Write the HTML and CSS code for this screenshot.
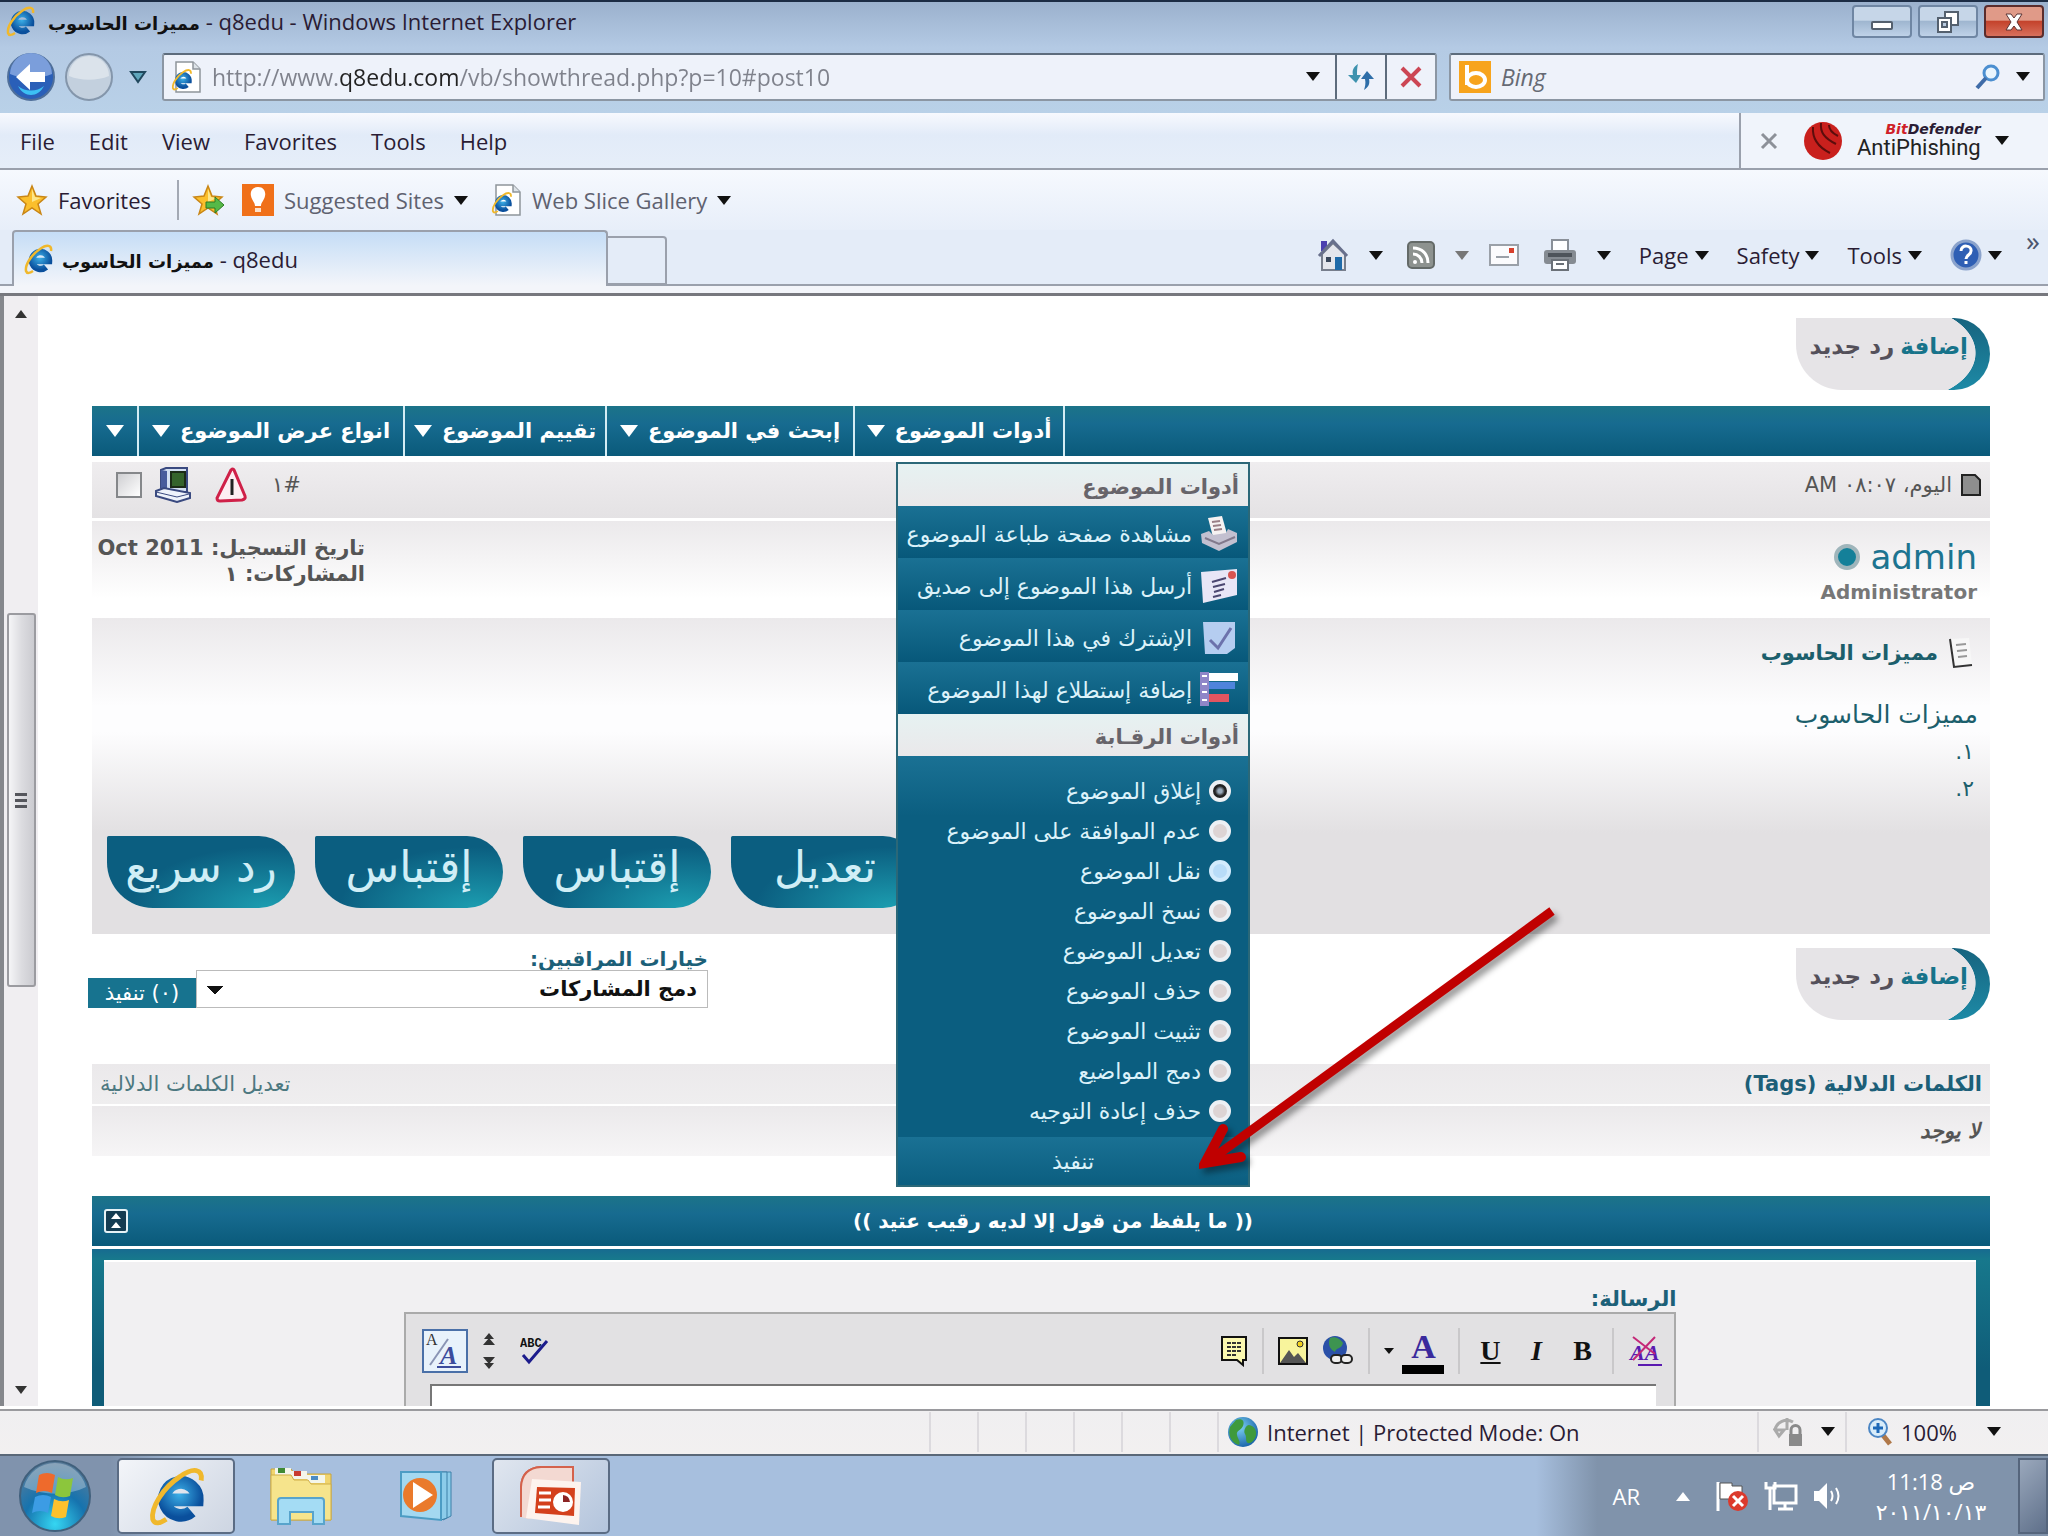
FILE: index.html
```html
<!DOCTYPE html>
<html lang="en">
<head>
    <meta charset="UTF-8">
    <meta name="viewport" content="width=device-width, initial-scale=1.0">
    <title>مميزات الحاسوب - q8edu</title>
    <link rel="stylesheet" href="styles.css">
</head>
<body>
    <!-- shared icons -->
    <svg class="defs" width="0" height="0">
        <defs>
            <radialGradient id="ieBlue" cx="45%" cy="35%" r="70%">
                <stop offset="0" stop-color="#3cb0e8"/>
                <stop offset="1" stop-color="#0a4f9c"/>
            </radialGradient>
            <radialGradient id="orb" cx="50%" cy="90%" r="90%">
                <stop offset="0" stop-color="#35d6f2"/>
                <stop offset="0.5" stop-color="#1673ae"/>
                <stop offset="1" stop-color="#5c7d9a"/>
            </radialGradient>
            <radialGradient id="globe" cx="40%" cy="35%" r="70%">
                <stop offset="0" stop-color="#7cd0f0"/>
                <stop offset="1" stop-color="#1660a8"/>
            </radialGradient>
            <symbol id="ie" viewBox="0 0 32 32">
                <path d="M10 18h17a8.500 8.500 0 1 0-3 6" fill="none" stroke="url(#ieBlue)" stroke-width="6.500"/>
                <path d="M29 8C30 2 25 1 18 6 9 12 3 22 4 28c1 3 4 2 7 0" fill="none" stroke="#f0b82c" stroke-width="2.500"/>
            </symbol>
            <symbol id="iepage" viewBox="0 0 32 32">
                <path d="M6 1h17l7 7v23H6z" fill="#fff" stroke="#8f959b" stroke-width="1.500"/>
                <path d="M23 1v7h7" fill="#dde3e8" stroke="#8f959b" stroke-width="1.500"/>
                <use href="#ie" x="0" y="7" width="23" height="23"/>
            </symbol>
            <symbol id="star" viewBox="0 0 32 32">
                <path d="M16 2l4 10 10 1-8 7 3 10-9-6-9 6 3-10-8-7 10-1z" fill="#fbbf2c" stroke="#c98616" stroke-width="1.500"/>
                <path d="M16 5l3 8 6 1-9 4z" fill="#fde68a"/>
            </symbol>
        </defs>
    </svg>

    <div class="window">
        <header class="titlebar">
            <svg class="icon"><use href="#ie"/></svg>
            <span class="title"><bdi class="ar">مميزات الحاسوب</bdi> - q8edu - Windows Internet Explorer</span>
            <div class="winbuttons">
                <button class="winbtn" aria-label="Minimize"><svg width="24" height="20" viewBox="0 0 24 20"><rect x="2" y="10" width="20" height="7" rx="1" fill="#fff" stroke="#54606e" stroke-width="2"/></svg></button>
                <button class="winbtn" aria-label="Restore"><svg width="24" height="24" viewBox="0 0 24 24"><path d="M9 2h13v13H9z" fill="#fff" stroke="#54606e" stroke-width="2"/><path d="M2 8h13v14H2z" fill="#fff" stroke="#54606e" stroke-width="2"/><path d="M6 12h5v5H6z" fill="#b9cbe0" stroke="#54606e" stroke-width="2"/></svg></button>
                <button class="winbtn close" aria-label="Close"><svg width="24" height="20" viewBox="0 0 24 20"><path d="M4 2h5l3 4 3-4h5l-5 8 5 8h-5l-3-4-3 4H4l5-8z" fill="#fff" stroke="#5c3434" stroke-width="1"/></svg></button>
            </div>
        </header>

        <div class="navbar">
            <button class="navbtn" aria-label="Back">
                <svg width="50" height="50" viewBox="0 0 50 50"><circle cx="25" cy="25" r="23" fill="#2a5fb8" stroke="#4f6f9a" stroke-width="2"/><path d="M4 22a21 21 0 0 1 42 0c-12 5-30 5-42 0z" fill="#7b9edb"/><path d="M12 34a21 21 0 0 0 26 0c-6 12-20 12-26 0z" fill="#3cc0f4"/><path d="M10 25l14-13v8h15v10H24v8z" fill="#fff"/></svg>
            </button>
            <button class="navbtn" aria-label="Forward">
                <svg width="50" height="50" viewBox="0 0 50 50"><circle cx="25" cy="25" r="23" fill="#c3d0de" stroke="#8496ab" stroke-width="2"/><path d="M5 24a20 20 0 0 1 40 0c-12 5-28 5-40 0z" fill="#dbe3eb"/></svg>
            </button>
            <button class="recent" aria-label="Recent pages"><svg width="18" height="14" viewBox="0 0 18 14"><path d="M2 2h14l-7 10z" fill="#5fa6bc" stroke="#20485e" stroke-width="2"/></svg></button>
            <div class="addressbox">
                <svg class="icon"><use href="#iepage"/></svg>
                <input class="address" type="text" aria-label="Address" value="http://www.q8edu.com/vb/showthread.php?p=10#post10">
                <button class="plain" aria-label="Show addresses"><i class="caret"></i></button>
                <button class="boxbtn" aria-label="Refresh"><svg width="30" height="30" viewBox="0 0 30 30"><path d="M12 2C7 5 6 9 7 13H2l8 8 5-8h-4c0-4 0-7 1-11z" fill="#3d92ae"/><path d="M18 28c5-3 6-7 5-11h5l-7-8-6 8h4c1 4 0 8-1 11z" fill="#2e6ea8"/></svg></button>
                <button class="boxbtn" aria-label="Stop"><svg width="24" height="24" viewBox="0 0 24 24"><path d="M3 3l18 18M21 3L3 21" stroke="#cc4654" stroke-width="4"/></svg></button>
            </div>
            <div class="searchbox">
                <svg width="32" height="32" viewBox="0 0 32 32"><rect width="32" height="32" fill="#f7a41d"/><path d="M8 4v20" stroke="#fff" stroke-width="4"/><ellipse cx="17" cy="19" rx="9" ry="7" fill="none" stroke="#fff" stroke-width="4"/></svg>
                <input class="search" type="text" aria-label="Search" placeholder="Bing">
                <button class="plain" aria-label="Search"><svg width="26" height="26" viewBox="0 0 26 26"><circle cx="16" cy="9" r="7" fill="#eaf5fd" stroke="#4c8fd0" stroke-width="3"/><path d="M11 14l-9 10" stroke="#3f6ca8" stroke-width="4"/></svg></button>
                <button class="plain" aria-label="Search options"><i class="caret"></i></button>
            </div>
        </div>

        <div class="menubar">
            <nav class="menus">
                <a href="#">File</a><a href="#">Edit</a><a href="#">View</a><a href="#">Favorites</a><a href="#">Tools</a><a href="#">Help</a>
            </nav>
            <div class="antiphishing">
                <button class="plain" aria-label="Close toolbar"><svg width="18" height="18" viewBox="0 0 18 18"><path d="M2 2l14 14M16 2L2 16" stroke="#8d9199" stroke-width="3"/></svg></button>
                <svg width="40" height="40" viewBox="0 0 40 40"><circle cx="20" cy="20" r="19" fill="#c9201d"/><path d="M10 6c-1 12 5 20 17 26M18 2c-1 9 3 15 15 21M26 4c0 4 3 8 9 11" fill="none" stroke="#5c0d0c" stroke-width="2"/></svg>
                <div class="bitdefender"><span class="brand"><b>Bit</b>Defender</span><span class="product">AntiPhishing</span></div>
                <i class="caret"></i>
            </div>
        </div>

        <div class="favbar">
            <svg class="icon"><use href="#star"/></svg>
            <a href="#" class="dark">Favorites</a>
            <span class="sep"></span>
            <svg class="icon" viewBox="0 0 32 32"><use href="#star"/><path d="M14 18h9v-5l9 8-9 8v-5h-9z" fill="#56b947" stroke="#2d7a24"/></svg>
            <svg class="icon suggested" viewBox="0 0 32 32"><rect width="32" height="32" fill="#f07019"/><path d="M16 3c-6 0-8 5-7 9 1 5 4 6 4 10h6c0-4 3-5 4-10 1-4-1-9-7-9z" fill="#fff"/><path d="M13 24h6v4h-6z" fill="#fde0c8"/></svg>
            <a href="#">Suggested Sites</a>
            <i class="caret"></i>
            <svg class="icon slice"><use href="#iepage"/></svg>
            <a href="#">Web Slice Gallery</a>
            <i class="caret"></i>
        </div>

        <div class="tabrow">
            <div class="tab">
                <svg class="icon"><use href="#ie"/></svg>
                <span><bdi class="ar">مميزات الحاسوب</bdi> - q8edu</span>
            </div>
            <button class="newtab" aria-label="New tab"></button>
            <div class="commands">
                <button class="cmd" aria-label="Home"><svg width="32" height="34" viewBox="0 0 32 34"><path d="M4 3h6v10H4z" fill="#4a3fb0"/><path d="M5 16v16h23V16L16 5z" fill="#e4e6ec" stroke="#777e8c" stroke-width="2"/><path d="M2 18L16 3l14 15" fill="none" stroke="#68708c" stroke-width="3"/><path d="M18 19h7v13h-7z" fill="#1f6aa8"/><path d="M9 19h5v5H9z" fill="#394659"/></svg><i class="caret"></i></button>
                <button class="cmd" aria-label="Feeds"><svg width="28" height="28" viewBox="0 0 28 28"><rect x="1" y="1" width="26" height="26" rx="4" fill="#8d928f" stroke="#646a68" stroke-width="2"/><circle cx="8" cy="21" r="2" fill="#fff"/><path d="M6 13c5 0 9 4 9 9M6 7c9 0 15 6 15 15" fill="none" stroke="#fff" stroke-width="3"/></svg><i class="caret dim"></i></button>
                <button class="cmd mail" aria-label="Read mail"><svg width="30" height="22" viewBox="0 0 30 22"><rect x="1" y="1" width="28" height="20" fill="#fbfbfd" stroke="#9aa0a8" stroke-width="2"/><rect x="20" y="4" width="5" height="5" fill="#d8402c"/><path d="M7 13h13" stroke="#9aa0a8" stroke-width="2"/></svg></button>
                <button class="cmd" aria-label="Print"><svg width="34" height="32" viewBox="0 0 34 32"><path d="M9 1h16v12H9z" fill="#fff" stroke="#8a9098" stroke-width="2"/><rect x="1" y="11" width="32" height="14" rx="3" fill="#858b92"/><path d="M5 14h24v4H5z" fill="#4e545b"/><path d="M9 21h16v10H9z" fill="#fff" stroke="#6b7178" stroke-width="2"/><path d="M13 25h8" stroke="#6b7178" stroke-width="2"/></svg><i class="caret"></i></button>
                <button class="cmd text">Page<i class="caret"></i></button>
                <button class="cmd text">Safety<i class="caret"></i></button>
                <button class="cmd text">Tools<i class="caret"></i></button>
                <button class="cmd text" aria-label="Help"><svg width="32" height="32" viewBox="0 0 32 32"><circle cx="16" cy="16" r="14" fill="#2f5fb4" stroke="#8ba3cc" stroke-width="3"/><path d="M11 12c0-7 11-6 10 0 0 4-5 4-5 8M16 22v3" fill="none" stroke="#fff" stroke-width="3"/></svg><i class="caret"></i></button>
                <span class="more">»</span>
            </div>
        </div>

        <main class="view">
            <div class="scrollbar">
                <i class="up"></i>
                <div class="thumb"><i></i><i></i><i></i></div>
                <i class="down"></i>
            </div>

            <div class="page" dir="rtl" lang="ar">
                <a href="#" class="newreply"><b>إضافة</b> رد جديد</a>

                <div class="toolbar" dir="ltr">
                    <a href="#" aria-label="خيارات"><i class="caret white"></i></a>
                    <a href="#"><i class="caret white"></i><bdi>انواع عرض الموضوع</bdi></a>
                    <a href="#"><i class="caret white"></i><bdi>تقييم الموضوع</bdi></a>
                    <a href="#"><i class="caret white"></i><bdi>إبحث في الموضوع</bdi></a>
                    <div class="opened">
                        <a href="#"><i class="caret white"></i><bdi>أدوات الموضوع</bdi></a>
                        <form class="popup" dir="rtl">
                            <h2>أدوات الموضوع</h2>
                            <a href="#"><svg width="38" height="36" viewBox="0 0 38 36"><path d="M8 2l14-2 5 18-14 3z" fill="#f6f2f2"/><path d="M12 6l8-1M13 10l8-1M14 14l8-1" stroke="#9a7f86" stroke-width="2"/><path d="M1 18l8-3 4 4 13-2 2-4 9 4v9l-18 9-17-8z" fill="#c3c0d0"/><path d="M5 22l14 6 16-7" fill="none" stroke="#82798c" stroke-width="2"/></svg>مشاهدة صفحة طباعة الموضوع</a>
                            <a href="#"><svg width="38" height="36" viewBox="0 0 38 36"><path d="M1 4l36-3v26L3 35z" fill="#e8e6f6"/><path d="M12 14l14-4M13 19l12-3M14 24l10-3M13 29l8-2" stroke="#4b4670" stroke-width="2"/><circle cx="32" cy="7" r="4" fill="#d85450"/></svg>أرسل هذا الموضوع إلى صديق</a>
                            <a href="#"><svg width="38" height="36" viewBox="0 0 38 36"><path d="M3 2h32v26l-8 6H5z" fill="#b5cdf0"/><path d="M10 20l8 8L31 8" fill="none" stroke="#6c72ac" stroke-width="3"/></svg>الإشترك في هذا الموضوع</a>
                            <a href="#"><svg width="38" height="36" viewBox="0 0 38 36"><path d="M0 0h9v34H0z" fill="#8f86c8"/><path d="M9 1h29v8H9z" fill="#fff"/><path d="M9 10h26v7H9z" fill="#4f84dc"/><path d="M9 22h20v8H9z" fill="#e25560"/><path d="M2 4h5M2 12h5M2 20h5M2 28h5" stroke="#fff" stroke-width="2"/></svg>إضافة إستطلاع لهذا الموضوع</a>
                            <h2>أدوات الرقـابة</h2>
                            <div class="choices">
                                <label><input type="radio" name="do" checked>إغلاق الموضوع</label>
                                <label><input type="radio" name="do">عدم الموافقة على الموضوع</label>
                                <label><input type="radio" name="do" class="hot">نقل الموضوع</label>
                                <label><input type="radio" name="do">نسخ الموضوع</label>
                                <label><input type="radio" name="do">تعديل الموضوع</label>
                                <label><input type="radio" name="do">حذف الموضوع</label>
                                <label><input type="radio" name="do">تثبيت الموضوع</label>
                                <label><input type="radio" name="do">دمج المواضيع</label>
                                <label><input type="radio" name="do">حذف إعادة التوجيه</label>
                            </div>
                            <button type="button" class="go">تنفيذ</button>
                        </form>
                    </div>
                    <span></span>
                </div>

                <article class="post">
                    <div class="posthead">
                        <svg width="22" height="24" viewBox="0 0 22 24"><path d="M2 2h13l5 5v15H2z" fill="#8e8e8e" stroke="#222" stroke-width="2"/></svg>
                        <span>اليوم، ٠٨:٠٧ AM</span>
                        <div class="postlinks" dir="ltr">
                            <input type="checkbox" aria-label="تحديد المشاركة">
                            <svg width="38" height="36" viewBox="0 0 38 36"><path d="M7 3l5-2h21v24H12l-5-4z" fill="#d4e0f2" stroke="#3a4a80" stroke-width="2"/><path d="M7 3l6 1v20l-6-3z" fill="#485c9c"/><path d="M17 5h14v15H17z" fill="#35642c" stroke="#1c2c18" stroke-width="2"/><path d="M2 24l8-3 26 5v5l-13 4L2 29z" fill="#eef3fb" stroke="#3a4a80" stroke-width="2"/><path d="M2 25l21 5 12-3" fill="none" stroke="#3a4a80"/></svg>
                            <svg class="warn" width="34" height="36" viewBox="0 0 34 36"><path d="M17 3L3 31q0 3 3 3l22-1q4-1 3-4L20 3q-1-2-3 0z" fill="#fdeef2" stroke="#cf2048" stroke-width="3"/><path d="M18 12v16" stroke="#222" stroke-width="3"/></svg>
                            <a href="#">١#</a>
                        </div>
                    </div>
                    <div class="poster">
                        <div>
                            <div class="user"><a href="#">admin</a><i class="online"></i></div>
                            <div class="rank">Administrator</div>
                        </div>
                        <div class="stats">تاريخ التسجيل: Oct 2011<br>المشاركات: ١</div>
                    </div>
                    <div class="message">
                        <h3><svg width="26" height="32" viewBox="0 0 26 32"><path d="M2 2l19-1 3 27-18 3z" fill="#f7f7f7"/><path d="M2 2l4 28 18-2" fill="none" stroke="#333" stroke-width="2"/><path d="M8 8l10-1M9 14l10-1M10 20l9-1" stroke="#999" stroke-width="2"/></svg>مميزات الحاسوب</h3>
                        <p class="lead">مميزات الحاسوب</p>
                        <p>١.</p>
                        <p>٢.</p>
                        <div class="actions" dir="ltr">
                            <a href="#">رد سريع</a>
                            <a href="#">إقتباس</a>
                            <a href="#">إقتباس</a>
                            <a href="#">تعديل</a>
                        </div>
                    </div>
                </article>

                <div class="afterpost">
                    <a href="#" class="newreply"><b>إضافة</b> رد جديد</a>
                    <div class="moderate">
                        <label for="modopt">خيارات المراقبين:</label>
                        <div class="modrow">
                            <select id="modopt"><option>دمج المشاركات</option></select>
                            <button>(٠) تنفيذ</button>
                        </div>
                    </div>
                </div>

                <section class="tags">
                    <div class="tagshead"><b>الكلمات الدلالية (Tags)</b><a href="#">تعديل الكلمات الدلالية</a></div>
                    <div class="tagsbody">لا يوجد</div>
                </section>

                <div class="quickhead">
                    <span>(( ما يلفظ من قول إلا لديه رقيب عتيد ))</span>
                    <button aria-label="طي"><svg width="24" height="24" viewBox="0 0 24 24"><rect x="1" y="1" width="22" height="22" rx="2" fill="#143c52" stroke="#e6f2f6" stroke-width="2"/><path d="M12 4l5 6H7zM12 13l5 6H7z" fill="#fff"/></svg></button>
                </div>
                <div class="quickbody">
                    <div class="panel">
                        <div class="editor">
                            <label for="msg">الرسالة:</label>
                            <div class="box">
                                <div class="tools" dir="ltr">
                                    <button class="on" aria-label="Switch mode"><svg width="42" height="40" viewBox="0 0 42 40"><text x="2" y="14" class="aa">A</text><path d="M6 34L24 8" stroke="#8a94b4" stroke-width="2"/><text x="16" y="33" class="aa big">A</text><path d="M13 36h24" stroke="#3c4c9c" stroke-width="2"/></svg></button>
                                    <button aria-label="Resize"><svg width="14" height="36" viewBox="0 0 14 36"><path d="M7 0l5 6H2zM7 5l6 7H1zM7 36l5-6H2zM7 31l6-7H1z" fill="#333"/></svg></button>
                                    <button class="spell" aria-label="Spelling"><svg width="32" height="30" viewBox="0 0 32 30"><text x="0" y="11" class="abc">ABC</text><path d="M3 19l6 7L27 5" fill="none" stroke="#1c1c8c" stroke-width="3"/></svg></button>
                                    <span class="fill"></span>
                                    <button aria-label="Quote"><svg width="28" height="32" viewBox="0 0 28 32"><path d="M2 2h24v23h-3v5l-6-5H2z" fill="#fbf8b0" stroke="#111" stroke-width="2"/><path d="M7 8h14M7 12h14M7 16h14M7 20h10" stroke="#333" stroke-width="2" stroke-dasharray="4 1"/></svg></button>
                                    <i class="line"></i>
                                    <button aria-label="Image"><svg width="30" height="28" viewBox="0 0 30 28"><rect x="1" y="1" width="28" height="26" fill="#f8f49c" stroke="#111" stroke-width="2"/><circle cx="22" cy="7" r="3" fill="#f4d21c" stroke="#333"/><path d="M2 26l9-13 5 7 4-4 8 10z" fill="#555"/></svg></button>
                                    <button aria-label="Link"><svg width="32" height="32" viewBox="0 0 32 32"><circle cx="13" cy="13" r="12" fill="#2a50a8"/><path d="M8 3c6-2 10 1 13 5-2 7-7 4-8 9-4-2-8-7-5-14z" fill="#3d9450"/><rect x="9" y="20" width="11" height="8" rx="4" fill="#eee" stroke="#222" stroke-width="2"/><rect x="19" y="20" width="11" height="8" rx="4" fill="#eee" stroke="#222" stroke-width="2"/></svg></button>
                                    <i class="line"></i>
                                    <button class="color" aria-label="Text color"><i class="caret small"></i><b>A</b></button>
                                    <i class="line"></i>
                                    <button class="glyph"><u>U</u></button>
                                    <button class="glyph"><i>I</i></button>
                                    <button class="glyph">B</button>
                                    <i class="line"></i>
                                    <button aria-label="Remove formatting"><svg width="36" height="32" viewBox="0 0 36 32"><text x="2" y="25" class="aa rm">AA</text><path d="M5 2l22 17M27 2L5 25" stroke="#c42878" stroke-width="2"/><path d="M10 30h24" stroke="#5a1ab0" stroke-width="2"/></svg></button>
                                </div>
                                <textarea id="msg"></textarea>
                            </div>
                        </div>
                    </div>
                </div>
            </div>

            <!-- arrow drawn over the page -->
            <svg class="arrow" width="370" height="280" viewBox="0 0 370 280">
                <path d="M353 4L10 254" fill="none" stroke="#c00000" stroke-width="9"/>
                <path d="M24 222L6 256L42 250" fill="none" stroke="#c00000" stroke-width="10" stroke-linecap="round" stroke-linejoin="miter"/>
            </svg>
        </main>

        <footer class="status">
            <span class="cell"></span><span class="cell"></span><span class="cell"></span><span class="cell"></span><span class="cell"></span><span class="cell"></span>
            <div class="zone">
                <svg width="32" height="32" viewBox="0 0 32 32"><circle cx="16" cy="16" r="15" fill="url(#globe)"/><path d="M9 4c6-2 9 1 7 6s-7 4-6 9 4 6 2 10C3 26 1 18 3 11zM22 9c5 1 8 5 7 10s-5 9-8 8-1-6-3-9 1-9 4-9z" fill="#3f9a3c"/></svg>
                Internet | Protected Mode: On
            </div>
            <div class="protect">
                <svg width="32" height="32" viewBox="0 0 32 32"><path d="M2 14a12 12 0 0 1 18-8M2 14l4 6 5-6zM14 2v12" fill="none" stroke="#aaa" stroke-width="3"/><rect x="16" y="18" width="13" height="12" fill="#8a8a8a"/><path d="M18 18v-4a4 4 0 0 1 9 0v4" fill="none" stroke="#8a8a8a" stroke-width="3"/></svg>
                <i class="caret"></i>
            </div>
            <div class="zoomlevel">
                <svg width="26" height="28" viewBox="0 0 26 28"><path d="M15 16l8 10" stroke="#b07848" stroke-width="5"/><circle cx="11" cy="10" r="9" fill="#d8ecfa" stroke="#4c86c4" stroke-width="2"/><path d="M11 5v10M6 10h10" stroke="#1d68b8" stroke-width="3"/></svg>
                100%
                <i class="caret"></i>
            </div>
        </footer>
    </div>

    <div class="taskbar">
        <button class="start" aria-label="Start">
            <svg width="74" height="74" viewBox="0 0 74 74"><circle cx="37" cy="37" r="35" fill="url(#orb)" stroke="#40607c" stroke-width="2"/><path d="M6 28a32 32 0 0 1 62 0c-18 9-42 9-62 0z" fill="#fff" opacity="0.300"/><path d="M21 16q8-4 16 0l-3 18q-8-4-16 0z" fill="#ee6a2c"/><path d="M40 18q7 4 15 1l-3 18q-8 3-15-1z" fill="#8cc63c"/><path d="M17 38q8-4 16 0l-3 16q-8-4-16 0z" fill="#3c9ce4"/><path d="M36 40q8 4 15 1l-3 17q-8 3-15-1z" fill="#fcc12c"/></svg>
        </button>
        <button class="task active" aria-label="Internet Explorer"><svg width="62" height="62"><use href="#ie"/></svg></button>
        <button class="task" aria-label="Windows Explorer">
            <svg width="64" height="60" viewBox="0 0 64 60"><path d="M2 3h20l4 5h36v46H2z" fill="#f1d56e" stroke="#c7a43c"/><path d="M6 2h16v8H6zM22 5h16v8H22zM38 9h18v8H38z" fill="#f4f6ea"/><path d="M9 2h7v5H9z" fill="#3f8a34"/><path d="M25 5h7v5h-7z" fill="#c83c30"/><path d="M42 10h7v4h-7z" fill="#4c8cc4"/><path d="M2 9h20l3 5h14l3 4h20v36H2z" fill="#f6e48c" stroke="#cfae48"/><path d="M9 58V35q0-3 3-3h40q3 0 3 3v23H44V46H21v12z" fill="#a4dcf4" stroke="#58a4cc" stroke-width="2"/></svg>
        </button>
        <button class="task" aria-label="Media Player">
            <svg width="54" height="52" viewBox="0 0 54 52"><path d="M10 2h42v44l-8 4z" fill="#8cccea" stroke="#3c80a8"/><path d="M6 2h42v46l-6 2z" fill="#8cccea" stroke="#3c80a8"/><path d="M2 2h40v48L2 46z" fill="#a4d8f0" stroke="#4c9cc4" stroke-width="2"/><circle cx="21" cy="25" r="17" fill="#ea7a2c"/><path d="M14 12l20 13-20 13z" fill="#fff"/></svg>
        </button>
        <button class="task open" aria-label="PowerPoint">
            <svg width="64" height="62" viewBox="0 0 64 62"><path d="M2 52V22Q3 3 22 2h32v24" fill="#eddcd8" stroke="#d4624c" stroke-width="2"/><path d="M2 52V22Q3 3 22 2h32v30L10 54z" fill="#f3d9d2"/><path d="M2 52V22Q3 3 22 2h32v24" fill="none" stroke="#d4624c" stroke-width="2"/><path d="M13 14l49 3-2 43-53-7z" fill="#fdf3ee"/><path d="M18 22l38 1-1 28-39-3z" fill="#d4401c"/><path d="M20 28h12M20 35h12M19 42h12" stroke="#fff" stroke-width="3"/><circle cx="44" cy="37" r="10" fill="#fff"/><path d="M44 37v-7a8 8 0 0 1 7 7z" fill="#8c2424"/></svg>
        </button>
        <div class="tray">
            <span class="lang">AR</span>
            <i class="caret upward"></i>
            <svg width="36" height="32" viewBox="0 0 36 32"><path d="M4 2v29" stroke="#fff" stroke-width="3"/><path d="M6 3h12v3h10v13H6z" fill="#fff" stroke="#555" stroke-width="1"/><circle cx="24" cy="21" r="10" fill="#dc3a2c"/><path d="M19 16l10 10M29 16L19 26" stroke="#fff" stroke-width="3"/></svg>
            <svg width="34" height="32" viewBox="0 0 34 32"><rect x="10" y="6" width="22" height="17" fill="#7b8ea5" stroke="#fff" stroke-width="3"/><path d="M14 29h15M21 23v6" stroke="#fff" stroke-width="3"/><path d="M2 2v6h9V2M6 8v22" fill="none" stroke="#fff" stroke-width="3"/></svg>
            <svg width="32" height="32" viewBox="0 0 32 32"><path d="M2 11h5l8-8v26l-8-8H2z" fill="#fff"/><path d="M19 11q3 5 0 10M24 8q5 8 0 16" fill="none" stroke="#fff" stroke-width="2"/></svg>
            <div class="clock"><span dir="rtl">ص 11:18</span><span>٢٠١١/١٠/١٣</span></div>
            <button class="desktop" aria-label="Show desktop"></button>
        </div>
    </div>
</body>
</html>
```
FILE: styles.css
```css
* {
    box-sizing: border-box;
}
body {
    margin: 0;
    height: 100vh;
    display: flex;
    flex-direction: column;
    overflow: hidden;
    font-family: "Open Sans", "DejaVu Sans", sans-serif;
    font-size: 22px;
    color: #2a1c34;
    background: #fff;
}
button {
    font: inherit;
    color: inherit;
    border: none;
    background: none;
    padding: 0;
    display: flex;
    align-items: center;
    justify-content: center;
}
a {
    color: inherit;
    text-decoration: none;
}
svg {
    flex: none;
}
.defs {
    position: absolute;
}
.icon {
    width: 32px;
    height: 32px;
}
.ar {
    font-family: "DejaVu Sans", sans-serif;
    font-size: 18px;
    font-weight: bold;
    color: #111;
}
.caret {
    flex: none;
    border: 7px solid transparent;
    border-top: 9px solid #111;
    border-bottom: none;
}
.caret.dim {
    border-top-color: #777;
}
.caret.small {
    border-width: 6px 5px 0;
}
.caret.white {
    border-width: 12px 9px 0;
    border-top-color: #fff;
}
.caret.upward {
    margin-right: 10px;
    border-top: none;
    border-bottom: 9px solid #fff;
}

/* browser window */
.window {
    flex: 1;
    min-height: 0;
    display: flex;
    flex-direction: column;
}
.titlebar {
    height: 48px;
    display: flex;
    align-items: center;
    gap: 12px;
    padding: 0 4px 8px;
    border-top: 2px solid #1c2c44;
    background: linear-gradient(#9bb1cd, #b4cae4);
}
.title {
    flex: 1;
}
.winbuttons {
    display: flex;
    gap: 6px;
    align-self: flex-start;
    padding-top: 3px;
}
.winbtn {
    width: 60px;
    height: 33px;
    border: 2px solid #6f86a3;
    border-radius: 4px;
    background: linear-gradient(#c6d6e8 45%, #9fb6d0 50%, #bfd2e8);
}
.winbtn.close {
    border-color: #5a2c2c;
    background: linear-gradient(#e09a88 45%, #c4432c 50%, #d8705c);
}
.navbar {
    height: 65px;
    display: flex;
    align-items: center;
    padding: 0 3px 8px 6px;
    gap: 8px;
    background: linear-gradient(#b4cae4, #b9d1e8);
}
.recent {
    width: 32px;
}
.addressbox, .searchbox {
    height: 48px;
    display: flex;
    align-items: center;
    border: 2px solid #8b96a3;
    border-top-color: #5d6c7c;
    border-radius: 3px;
    background: #eef2fa;
    font-size: 23px;
}
.addressbox {
    flex: 1;
    padding-left: 6px;
    gap: 10px;
    margin-right: 4px;
}
.searchbox {
    width: 596px;
    padding: 0 8px;
    gap: 10px;
}
.address, .search {
    flex: 1;
    min-width: 0;
    border: none;
    background: none;
    font: inherit;
    padding: 0;
    outline: none;
}
/* the domain is drawn darker than the rest of the address */
.address {
    color: transparent;
    background: linear-gradient(90deg, #7f828c 127px, #222 127px, #222 248px, #7f828c 248px);
    -webkit-background-clip: text;
    background-clip: text;
}
.search::placeholder {
    font-style: italic;
    color: #666a74;
    opacity: 1;
}
.plain {
    min-width: 24px;
}
.boxbtn {
    width: 50px;
    height: 44px;
    border-left: 2px solid #5d6c7c;
}
.boxbtn + .boxbtn {
    margin-left: -10px;
}
.menubar {
    height: 57px;
    display: flex;
    border-bottom: 2px solid #9aa0ac;
    background: linear-gradient(#f7f9fe, #e2ebf8 40%, #e6eef9);
}
.menus {
    flex: 1;
    display: flex;
    align-items: center;
    gap: 34px;
    padding-left: 20px;
}
.antiphishing {
    width: 309px;
    display: flex;
    align-items: center;
    padding-left: 16px;
    gap: 14px;
    border-left: 2px solid #9aa0ac;
    background: #f0f4fb;
}
.antiphishing .plain {
    margin-right: 8px;
}
.bitdefender {
    display: flex;
    flex-direction: column;
    align-items: flex-end;
}
.brand {
    font: italic bold 14px/14px "DejaVu Sans", sans-serif;
}
.brand b {
    color: #cf1f28;
}
.product {
    font: 22px/24px Roboto, sans-serif;
    color: #222;
}
.favbar {
    height: 60px;
    display: flex;
    align-items: center;
    gap: 10px;
    padding-left: 16px;
    color: #5f6270;
    background: linear-gradient(#f6f9fe, #e7eef9);
}
.favbar .dark {
    color: #2a1c34;
}
.sep {
    width: 2px;
    height: 40px;
    margin: 0 3px 0 16px;
    background: #a3a9b4;
}
.suggested {
    margin-left: 8px;
}
.slice {
    margin-left: 12px;
}
.tabrow {
    height: 66px;
    display: flex;
    align-items: flex-start;
    background: linear-gradient(#e4ecf8 54px, #9aa0ac 54px, #9aa0ac 56px, #f3f5fa 56px);
    border-bottom: 3px solid #77787e;
}
.tab {
    width: 596px;
    height: 56px;
    margin-left: 12px;
    padding: 0 8px;
    display: flex;
    align-items: center;
    gap: 8px;
    border: 2px solid #9aa0ac;
    border-bottom: none;
    border-radius: 4px 4px 0 0;
    background: linear-gradient(#c5ddf6, #f3f5fa);
}
.newtab {
    width: 59px;
    height: 49px;
    margin-top: 6px;
    border: 2px solid #9aa0ac;
    border-left: none;
    border-radius: 0 4px 0 0;
}
.commands {
    flex: 1;
    height: 50px;
    display: flex;
    align-items: center;
    justify-content: flex-end;
    gap: 24px;
    padding-right: 8px;
}
.cmd {
    gap: 20px;
}
.cmd.text {
    gap: 6px;
    margin-left: 4px;
}
.mail {
    margin-left: -4px;
}
.more {
    align-self: flex-start;
    font-size: 28px;
    line-height: 20px;
    color: #4c566e;
}

/* page view */
.view {
    flex: 1;
    min-height: 0;
    display: flex;
    position: relative;
    overflow: hidden;
    border-left: 4px solid #85878c;
}
.scrollbar {
    width: 34px;
    display: flex;
    flex-direction: column;
    align-items: center;
    background: #f0eef1;
    padding: 14px 0 12px;
}
.up, .down {
    border: 6px solid transparent;
}
.up {
    border-top: none;
    border-bottom: 8px solid #333;
}
.down {
    border-bottom: none;
    border-top: 8px solid #333;
    margin-top: auto;
}
.thumb {
    width: 29px;
    height: 374px;
    margin-top: 295px;
    display: flex;
    flex-direction: column;
    align-items: center;
    justify-content: center;
    gap: 3px;
    border: 2px solid #9b9ba0;
    border-radius: 3px;
    background: linear-gradient(90deg, #f5f5f7, #dcdce0 50%, #cbcbd0);
}
.thumb i {
    width: 12px;
    height: 3px;
    background: #55565c;
}
.page {
    flex: 1;
    padding: 22px 58px 0 54px;
    font-family: "DejaVu Sans", sans-serif;
    font-size: 21px;
    color: #555;
}
.newreply {
    display: flex;
    align-items: center;
    width: 194px;
    height: 72px;
    padding: 0 22px 16px 0;
    gap: 6px;
    font-size: 23px;
    font-weight: bold;
    white-space: nowrap;
    color: #54505a;
    border-radius: 0 44px 44px 56px;
    background: radial-gradient(ellipse 76px 48px at 104px 35px, #e6e4e7 99%, transparent), linear-gradient(90deg, #e6e4e7 52%, transparent 52%), linear-gradient(#17647f, #1d8aa6);
}
.newreply b {
    color: #17738a;
}
.toolbar {
    display: grid;
    grid-template-columns: 47px 266px 202px 248px 210px 1fr;
    height: 50px;
    margin-top: 16px;
    font-weight: bold;
    color: #fff;
    background: linear-gradient(#1c7489, #176b90 35%, #0a5a7a);
}
.toolbar > a, .opened {
    border-right: 2px solid #d4ecf4;
}
.toolbar > a, .opened > a {
    display: flex;
    align-items: center;
    justify-content: center;
    gap: 10px;
    height: 50px;
}
.opened {
    position: relative;
}
.popup {
    position: absolute;
    z-index: 2;
    left: 41px;
    top: 56px;
    width: 354px;
    border: 2px solid #2b6878;
    background: #0b5e80;
    font-size: 22px;
    font-weight: normal;
    color: #dcf2fa;
}
.popup h2 {
    margin: 0;
    height: 42px;
    padding: 0 9px;
    font-size: 21px;
    line-height: 46px;
    color: #67646a;
    background: linear-gradient(#e6f2f2, #eae8ea);
}
.popup > a {
    height: 52px;
    display: flex;
    align-items: center;
    gap: 8px;
    padding: 4px 10px 0 0;
    white-space: nowrap;
    background: linear-gradient(#1a7194, #07587a);
}
.choices {
    padding: 15px 17px 6px;
    background: linear-gradient(#1a7194, #0b5e80 60px);
}
.choices label {
    display: flex;
    align-items: center;
    gap: 8px;
    height: 40px;
}
.choices input {
    appearance: none;
    width: 22px;
    height: 22px;
    margin: 0;
    border: 4px solid #edf0f4;
    border-radius: 50%;
    background: #ddd4d4;
}
.choices input:checked {
    background: radial-gradient(#9ab 2px, #222 5px);
}
.choices .hot {
    background: #b8dcf8;
    border-color: #d2ebfd;
}
.go {
    width: 100%;
    height: 48px;
    background: linear-gradient(#1a7194, #0b5e80);
}
.posthead {
    height: 56px;
    margin-top: 6px;
    display: flex;
    align-items: center;
    gap: 8px;
    padding: 0 8px 10px 24px;
    background: linear-gradient(#efedef, #e4e2e4);
}
.postlinks {
    margin-right: auto;
    display: flex;
    align-items: center;
    gap: 12px;
}
.postlinks a {
    margin-left: 12px;
}
.warn {
    margin-left: 10px;
}
.postlinks input {
    appearance: none;
    width: 26px;
    height: 26px;
    margin: 0;
    border: 2px solid #85878a;
    background: linear-gradient(135deg, #cfcfd2, #fff);
}
.poster {
    height: 97px;
    margin-top: 3px;
    display: flex;
    justify-content: space-between;
    padding: 14px 13px 0 12px;
    background: linear-gradient(#ebe9eb, #fff 80%);
}
.user {
    display: flex;
    align-items: center;
    gap: 10px;
    font-size: 34px;
    line-height: 44px;
    color: #1c7490;
}
.online {
    width: 26px;
    height: 26px;
    border: 4px solid #9fb5bb;
    border-radius: 50%;
    background: #148099;
}
.rank, .stats {
    font-weight: bold;
    line-height: 26px;
}
.rank {
    font-size: 20px;
    color: #777;
}
.stats {
    width: 261px;
    white-space: nowrap;
}
.message {
    height: 316px;
    display: flex;
    flex-direction: column;
    padding: 16px 12px 26px 15px;
    background: linear-gradient(#ebe9eb, #fdfdfe 28%, #fdfdfe 36%, #e2e0e2 68%);
    color: #1c5f6c;
}
.message h3 {
    margin: 0 4px 24px 0;
    display: flex;
    align-items: center;
    gap: 10px;
    height: 38px;
    font-size: 21px;
}
.message p {
    margin: 0 4px 0 0;
    font-size: 22px;
    line-height: 37px;
}
.message .lead {
    margin: 0;
    font-size: 25px;
}
.actions {
    margin-top: auto;
    display: flex;
    gap: 20px;
}
.actions a {
    width: 188px;
    height: 72px;
    padding-bottom: 10px;
    display: flex;
    align-items: center;
    justify-content: center;
    font-size: 44px;
    line-height: 60px;
    color: #d0eef6;
    border-radius: 2px 44px 44px 56px;
    background: radial-gradient(ellipse at 85% 100%, #1c9db0, #0b5e80 60%);
}
.afterpost {
    height: 130px;
    padding-top: 14px;
    display: flex;
    justify-content: space-between;
}
.moderate {
    width: 620px;
    margin-left: -4px;
}
.moderate label {
    display: block;
    font-size: 20px;
    font-weight: bold;
    line-height: 22px;
    color: #1c6078;
}
.modrow {
    display: flex;
    align-items: flex-end;
}
.modrow select {
    flex: 1;
    height: 38px;
    padding: 0 10px;
    border: 1px solid #bbb;
    appearance: none;
    font: inherit;
    font-weight: bold;
    color: #111;
    background: conic-gradient(from -42deg at 50% 100%, #111 84deg, transparent 84deg) 10px 15px / 16px 9px no-repeat, #fff;
}
.modrow button {
    width: 108px;
    height: 30px;
    color: #fff;
    background: #17738f;
}
.tagshead {
    height: 40px;
    display: flex;
    align-items: center;
    justify-content: space-between;
    padding: 0 8px;
    color: #4c7880;
    background: linear-gradient(#ebe9eb, #efeeef);
}
.tagshead b {
    color: #1c5f78;
}
.tagsbody {
    height: 50px;
    margin-top: 2px;
    padding: 0 10px;
    line-height: 50px;
    font-style: italic;
    font-weight: bold;
    background: linear-gradient(#ebe9eb, #f6f5f6);
}
.quickhead {
    height: 50px;
    margin-top: 40px;
    display: flex;
    align-items: center;
    padding: 0 12px;
    font-size: 20px;
    font-weight: bold;
    color: #fff;
    background: linear-gradient(#1c7489, #176b90 35%, #0a5a7a);
}
.quickhead span {
    flex: 1;
    text-align: center;
}
.quickbody {
    margin-top: 3px;
    padding: 11px 14px 0 12px;
    background: linear-gradient(#176b90, #17788c 10px, #0f5c78 120px);
}
.panel {
    height: 240px;
    padding-top: 24px;
    border-top: 2px solid #fff;
    background: #f1f0f2;
}
.editor {
    width: 68%;
    margin: 0 auto;
}
.editor label {
    display: block;
    line-height: 26px;
    font-weight: bold;
    color: #1c6078;
}
.box {
    border: 2px solid #aaa;
    padding: 4px 18px 0 24px;
    background: #e2e1e3;
}
.tools {
    height: 66px;
    display: flex;
    align-items: center;
    gap: 14px;
    margin: 0 -8px;
}
.tools .on {
    border: 2px solid #4a70a8;
    background: #e8f2fb;
}
.spell {
    margin-left: 10px;
}
.aa {
    font: 16px "Liberation Serif", serif;
    fill: #333;
}
.aa.big {
    font: italic bold 26px "Liberation Serif", serif;
    fill: #3c4c9c;
}
.aa.rm {
    font: italic bold 22px "Liberation Serif", serif;
    fill: #5a1ab0;
}
.abc {
    font: bold 12px "Liberation Mono", monospace;
    fill: #111;
}
.fill {
    flex: 1;
}
.line {
    width: 2px;
    height: 46px;
    background: #c9c8ca;
}
.color {
    gap: 8px;
}
.color b {
    width: 42px;
    height: 46px;
    font: bold 34px/38px "Liberation Serif", serif;
    color: #3a2a9c;
    border-bottom: 9px solid #000;
}
.glyph {
    width: 32px;
    font: bold 28px "Liberation Serif", serif;
    color: #111;
}
textarea {
    display: block;
    width: 100%;
    height: 120px;
    border: 2px solid #777;
    border-right: none;
    resize: none;
    background: #fff;
}
.arrow {
    position: absolute;
    z-index: 3;
    left: 1195px;
    top: 611px;
    filter: drop-shadow(4px 5px 3px rgba(0, 0, 0, 0.4));
}

/* status bar */
.status {
    height: 50px;
    display: flex;
    align-items: center;
    justify-content: flex-end;
    border-top: 3px solid #fff;
    border-bottom: 2px solid #5a6878;
    background: linear-gradient(#9a9a9e 2px, #f0eff1 2px, #f2f0f0);
}
.cell, .zone, .protect {
    height: 40px;
    border-left: 2px solid #dcdade;
}
.cell {
    width: 48px;
}
.zone, .protect, .zoomlevel {
    display: flex;
    align-items: center;
    gap: 8px;
}
.zone {
    width: 540px;
    padding-left: 8px;
}
.protect {
    width: 90px;
    gap: 16px;
    padding-left: 14px;
    border-right: 2px solid #dcdade;
}
.zoomlevel {
    width: 201px;
    padding-left: 20px;
}
.zoomlevel .caret {
    margin-left: 22px;
}

/* taskbar */
.taskbar {
    height: 80px;
    display: flex;
    align-items: center;
    background: linear-gradient(90deg, #8093ad 110px, #a7bfde 200px, #a7bfde 75%, #8093ab 78%);
}
.start {
    width: 110px;
}
.task {
    width: 118px;
    height: 76px;
    margin-left: 7px;
    border-radius: 5px;
}
.active, .open {
    border: 2px solid #5b6c84;
    background: linear-gradient(135deg, #f3f5f9, #cdd5e2);
}
.open {
    background: linear-gradient(135deg, #e0e6ef, #b3c4dc);
}
.tray {
    margin-left: auto;
    height: 100%;
    display: flex;
    align-items: center;
    gap: 14px;
    color: #fff;
}
.lang {
    margin-right: 22px;
}
.clock {
    width: 146px;
    display: flex;
    flex-direction: column;
    align-items: center;
    line-height: 30px;
}
.desktop {
    width: 30px;
    height: 76px;
    border: 2px solid #55657c;
    background: linear-gradient(135deg, #9aa8bc, #5f708a);
}
```
